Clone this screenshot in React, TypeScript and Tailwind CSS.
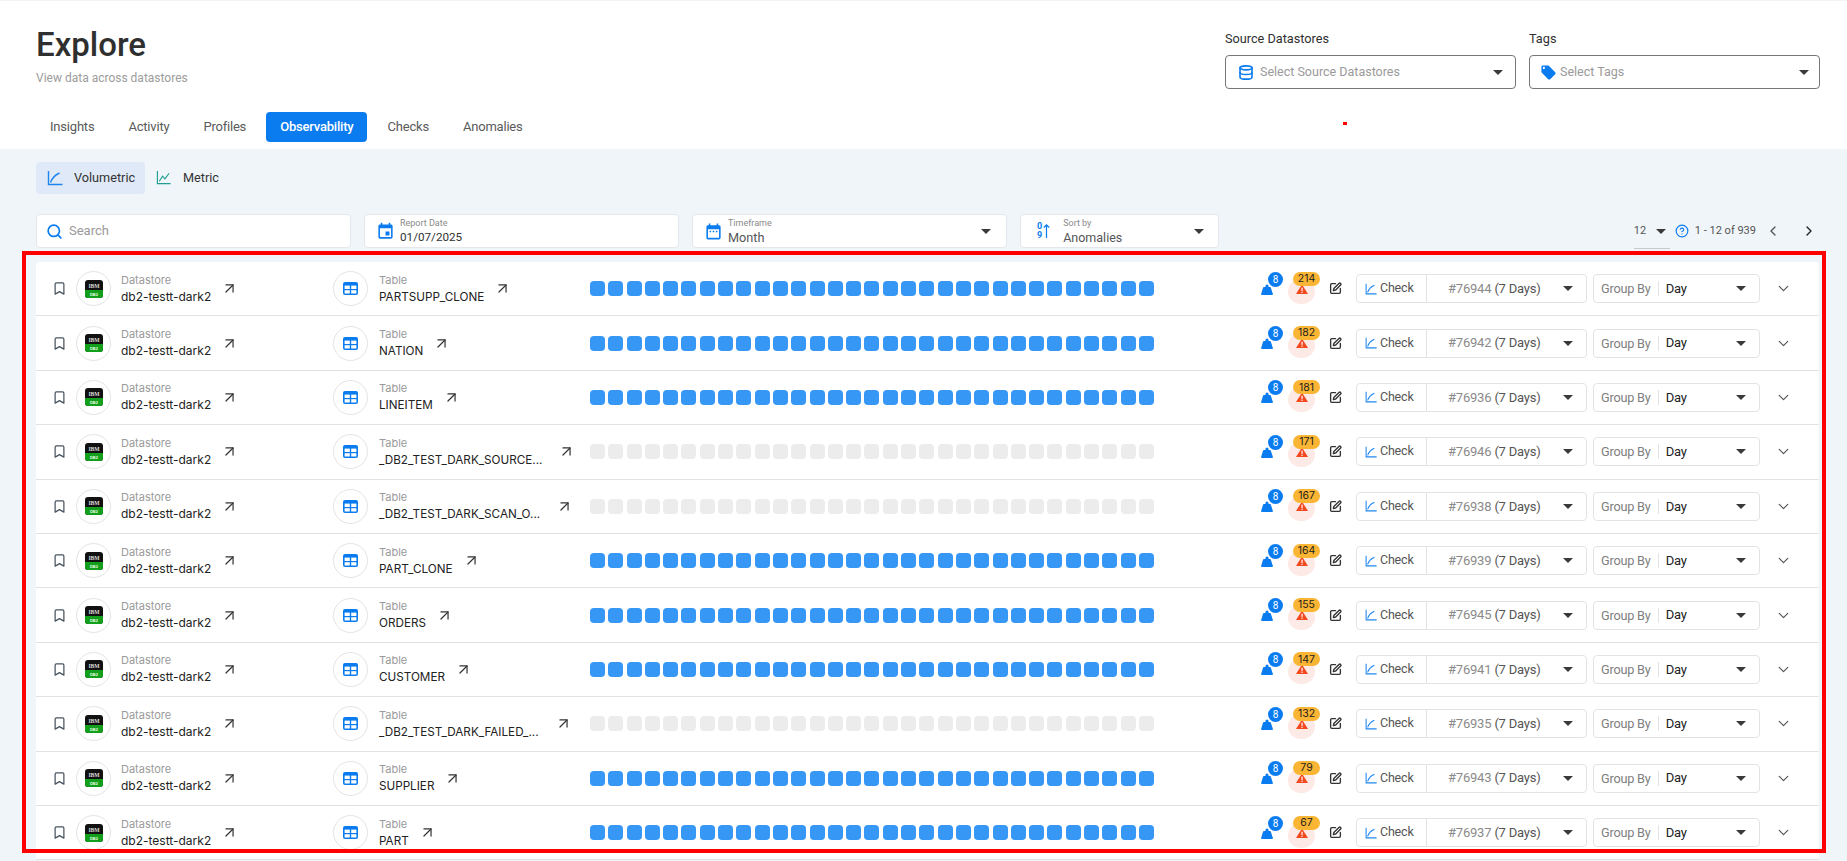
import { ArrowUpRight, Bookmark, ChevronDown, ChevronLeft, ChevronRight, CircleHelp, Database, Search, SquarePen } from 'lucide-react';
import { MdDateRange, MdEvent, MdLocalOffer } from 'react-icons/md';

const rows = [
  { table: 'PARTSUPP_CLONE', check: '#76944', count: 214, active: true },
  { table: 'NATION', check: '#76942', count: 182, active: true },
  { table: 'LINEITEM', check: '#76936', count: 181, active: true },
  { table: '_DB2_TEST_DARK_SOURCE...', check: '#76946', count: 171, active: false },
  { table: '_DB2_TEST_DARK_SCAN_O...', check: '#76938', count: 167, active: false },
  { table: 'PART_CLONE', check: '#76939', count: 164, active: true },
  { table: 'ORDERS', check: '#76945', count: 155, active: true },
  { table: 'CUSTOMER', check: '#76941', count: 147, active: true },
  { table: '_DB2_TEST_DARK_FAILED_...', check: '#76935', count: 132, active: false },
  { table: 'SUPPLIER', check: '#76943', count: 79, active: true },
  { table: 'PART', check: '#76937', count: 67, active: true },
];

const blocks = Array.from({ length: 31 }, (_, i) => i);
const tabs = ['Insights', 'Activity', 'Profiles', 'Observability', 'Checks', 'Anomalies'];

function Caret() {
  return <span className="inline-block w-0 h-0 border-x-[5px] border-x-transparent border-t-[5px] border-t-[#3a3a3a]" />;
}

function VolumeIcon({ className = '' }: { className?: string }) {
  return (
    <svg viewBox="0 0 16 16" fill="none" stroke="#1f86f0" strokeWidth="1.4" className={className}>
      <path d="M1.5 1v13.5H15.5" />
      <path d="M3.5 12.5C5 8 8 5 12.5 3" />
    </svg>
  );
}

function MetricIcon() {
  return (
    <svg viewBox="0 0 16 16" fill="none" strokeWidth="1.2" className="w-[15px] h-[15px]">
      <path d="M1.5 1v13.5H15.5" stroke="#1f9d8f" />
      <path d="M3.5 12L7 6.5l2.5 3L14 3.5" stroke="#1f9d8f" />
    </svg>
  );
}

function Db2Logo() {
  return (
    <svg viewBox="0 0 18 18" className="w-[18px] h-[18px]">
      <rect width="18" height="18" rx="3" fill="#111" />
      <path d="M0 10h18v5a3 3 0 0 1-3 3H3a3 3 0 0 1-3-3z" fill="#12a01c" />
      <text x="9" y="7.6" textAnchor="middle" fontSize="5.6" fontWeight="700" fill="#ddd" fontFamily="Liberation Serif, serif">IBM</text>
      <text x="9" y="15.6" textAnchor="middle" fontSize="4" fontWeight="700" fill="#e8ffe8" fontFamily="Liberation Sans, sans-serif">DB2</text>
    </svg>
  );
}

function TableIcon() {
  return (
    <svg viewBox="0 0 15 13" className="w-[15px] h-[13px]">
      <rect width="15" height="13" rx="2" fill="#0a7cf0" />
      <rect x="1.6" y="3.6" width="5.2" height="3.4" fill="#fff" />
      <rect x="8.2" y="3.6" width="5.2" height="3.4" fill="#fff" />
      <rect x="1.6" y="8.2" width="5.2" height="3.3" fill="#fff" />
      <rect x="8.2" y="8.2" width="5.2" height="3.3" fill="#fff" />
    </svg>
  );
}

function WeightIcon() {
  return (
    <svg viewBox="0 0 12 11" className="w-[12px] h-[11px]">
      <path d="M4.4 2.2a1.6 1.6 0 1 1 3.2 0c0 .3-.1.5-.2.7h1.6c.4 0 .7.2.8.6L11.9 10c.1.5-.2 1-.8 1H.9c-.6 0-.9-.5-.8-1l2-6.5c.1-.4.4-.6.8-.6h1.7a1.5 1.5 0 0 1-.2-.7z" fill="#0a7cf0" />
    </svg>
  );
}

function Row({ table, check, count, active }: { table: string; check: string; count: number; active: boolean }) {
  return (
    <div className="flex items-center h-[54.4px] border-b border-[#e2e2e2] bg-white pl-[16px]">
      <Bookmark className="w-[15px] h-[15px] text-[#4a5560] shrink-0" strokeWidth={2} />
      <div className="flex items-center w-[257px] ml-[9px] shrink-0">
        <div className="flex items-center justify-center w-[35px] h-[35px] rounded-full border border-[#e4e4e4] shrink-0">
          <Db2Logo />
        </div>
        <div className="ml-[10px] font-['Inter',sans-serif]">
          <div className="text-[11px] leading-[16px] text-[#9a9a9a]">Datastore</div>
          <div className="text-[12px] leading-[18px] text-[#222]">db2-testt-dark2</div>
        </div>
        <ArrowUpRight className="w-[17px] h-[17px] ml-[10px] text-[#333]" strokeWidth={1.7} />
      </div>
      <div className="flex items-center w-[257px] shrink-0">
        <div className="flex items-center justify-center w-[35px] h-[35px] rounded-full border border-[#e4e4e4] shrink-0">
          <TableIcon />
        </div>
        <div className="ml-[11px] font-['Inter',sans-serif]">
          <div className="text-[11px] leading-[16px] text-[#9a9a9a]">Table</div>
          <div className="text-[11.7px] leading-[18px] text-[#222] whitespace-nowrap">{table}</div>
        </div>
        <ArrowUpRight
          className={`w-[17px] h-[17px] text-[#333] shrink-0 ${table.endsWith('...') ? 'ml-[16px]' : 'ml-[10px]'}`}
          strokeWidth={1.7}
        />
      </div>
      <div className="flex gap-[3.3px] w-[671px] shrink-0">
        {blocks.map((b) => (
          <div key={b} className={`w-[15px] h-[15px] rounded-[4px] shrink-0 ${active ? 'bg-[#3797f5]' : 'bg-[#ececec]'}`} />
        ))}
      </div>
      <div className="relative w-[27px] h-[22px] shrink-0">
        <div className="absolute left-[0px] bottom-[5px]">
          <WeightIcon />
        </div>
        <div className="absolute left-[7px] top-[-6px] flex items-center justify-center w-[15px] h-[15px] rounded-full bg-[#0a7cf0] text-white text-[10px] font-['Roboto',sans-serif]">8</div>
      </div>
      <div className="relative flex items-end justify-center w-[27px] h-[25px] mt-[5px] rounded-full bg-[#fde9e5] shrink-0 pb-[10px]">
        <svg viewBox="0 0 14 11" className="w-[14px] h-[10px]">
          <path d="M7 0.5L13.6 11H0.4z" fill="#f4481e" />
          <rect x="6.4" y="4" width="1.3" height="3.6" fill="#fff" />
          <rect x="6.4" y="8.4" width="1.3" height="1.4" fill="#fff" />
        </svg>
        <div className="absolute left-[5px] top-[-7px] flex items-center justify-center w-[27px] h-[14px] rounded-full bg-[#fbb534] text-[10.5px] text-[#1d1d1d] font-['Inter',sans-serif]">{count}</div>
      </div>
      <SquarePen className="w-[13px] h-[13px] ml-[14px] text-[#333] shrink-0" strokeWidth={2.5} />
      <div className="flex items-center w-[231px] h-[29px] ml-[14px] rounded-[4px] border border-[#e3e3e3] shrink-0 font-['Roboto',sans-serif] text-[13px] tracking-[-0.2px]">
        <div className="flex items-center h-full w-[70px] border-r border-[#e3e3e3] pl-[8px]">
          <VolumeIcon className="w-[12px] h-[12px]" />
          <span className="ml-[3px] text-[12.5px] text-[#555]">Check</span>
        </div>
        <div className="flex items-center flex-1 pl-[21px] pr-[13px] justify-between">
          <span className="text-[#8a8a8a]">{check} <span className="text-[#555]">(7 Days)</span></span>
          <Caret />
        </div>
      </div>
      <div className="flex items-center w-[167px] h-[29px] ml-[6px] rounded-[4px] border border-[#e3e3e3] shrink-0 font-['Roboto',sans-serif] text-[13px] tracking-[-0.2px] pl-[7px] pr-[13px]">
        <span className="text-[12.7px] text-[#808080]">Group By</span>
        <span className="w-px h-[15px] bg-[#e3e3e3] ml-[7px]" />
        <span className="ml-[7px] flex-1 text-[#222]">Day</span>
        <Caret />
      </div>
      <ChevronDown className="w-[17px] h-[17px] ml-[15px] text-[#555] shrink-0" strokeWidth={1.7} />
    </div>
  );
}

export default function App() {
  return (
    <div className="relative h-[861px] overflow-hidden bg-[#f0f5fa] font-['Roboto',sans-serif]">
      <div className="h-[149px] bg-white border-t border-[#f3f3f3] px-[36px]">
        <div className="flex justify-between h-[111px]">
          <div className="pt-[24px]">
            <h1 className="text-[33px] leading-[40px] font-medium text-[#2f2f2f]">Explore</h1>
            <p className="mt-[4px] text-[12px] leading-[18px] text-[#9c9c9c]">View data across datastores</p>
          </div>
          <div className="flex gap-[13px] pt-[30px] mr-[-9px]">
            <div className="w-[291px]">
              <div className="text-[12.7px] leading-[16px] text-[#2f2f2f]">Source Datastores</div>
              <div className="flex items-center h-[34px] mt-[8px] px-[12px] rounded-[4px] border border-[#777]">
                <Database className="w-[16px] h-[17px] text-[#0a7cf0]" strokeWidth={2.4} />
                <span className="ml-[6px] flex-1 text-[12.5px] leading-[15px] mb-[2px] text-[#9a9a9a]">Select Source Datastores</span>
                <Caret />
              </div>
            </div>
            <div className="w-[291px]">
              <div className="text-[12.7px] leading-[16px] text-[#2f2f2f]">Tags</div>
              <div className="flex items-center h-[34px] mt-[8px] px-[10px] rounded-[4px] border border-[#777]">
                <MdLocalOffer className="w-[17px] h-[17px] text-[#0a7cf0]" />
                <span className="ml-[3px] flex-1 text-[12.5px] leading-[15px] mb-[2px] text-[#9a9a9a]">Select Tags</span>
                <Caret />
              </div>
            </div>
          </div>
        </div>
        <div className="flex items-center h-[30px] gap-[6px]">
          {tabs.map((t) => (
            <div
              key={t}
              className={`flex items-center h-full px-[14px] rounded-[4px] text-[13px] tracking-[-0.2px] ${t === 'Observability' ? 'bg-[#0a7cf0] text-white font-medium' : 'text-[#5a5a5a]'}`}
            >
              {t}
            </div>
          ))}
        </div>
      </div>

      <div className="px-[36px] pt-[13px]">
        <div className="flex items-center h-[32px] text-[12.7px] text-[#333]">
          <div className="flex items-center h-full w-[109px] pl-[11px] rounded-[4px] bg-[#dfe9f7]">
            <VolumeIcon className="w-[16px] h-[16px]" />
            <span className="ml-[11px]">Volumetric</span>
          </div>
          <div className="flex items-center ml-[11px]">
            <MetricIcon />
            <span className="ml-[12px]">Metric</span>
          </div>
        </div>

        <div className="flex items-center h-[34px] mt-[20px] gap-[13px] mr-[-9px]">
          <div className="flex items-center w-[315px] h-full pl-[9px] rounded-[4px] bg-white border border-[#e4e8ec]">
            <Search className="w-[17px] h-[17px] text-[#0a7cf0]" strokeWidth={2.4} />
            <span className="ml-[6px] text-[13px] text-[#9a9a9a]">Search</span>
          </div>
          <div className="flex items-center w-[315px] h-full pl-[11px] rounded-[4px] bg-white border border-[#e4e8ec]">
            <MdEvent className="w-[19px] h-[19px] text-[#0a7cf0]" />
            <div className="ml-[5px] mt-[2px]">
              <div className="text-[9px] leading-[11px] text-[#8a8a8a]">Report Date</div>
              <div className="text-[11.7px] leading-[17px] text-[#333]">01/07/2025</div>
            </div>
          </div>
          <div className="flex items-center w-[315px] h-full pl-[11px] pr-[15px] rounded-[4px] bg-white border border-[#e4e8ec]">
            <MdDateRange className="w-[19px] h-[19px] text-[#0a7cf0]" />
            <div className="ml-[5px] mt-[2px] flex-1">
              <div className="text-[9px] leading-[11px] text-[#8a8a8a]">Timeframe</div>
              <div className="text-[12.7px] leading-[17px] text-[#555]">Month</div>
            </div>
            <Caret />
          </div>
          <div className="flex items-center w-[199px] h-full pl-[16px] pr-[14px] rounded-[4px] bg-white border border-[#e4e8ec]">
            <div className="flex items-center gap-[1px] text-[#0a7cf0]">
              <div className="flex flex-col text-[9px] leading-[9px] font-bold">
                <span>0</span>
                <span>9</span>
              </div>
              <svg viewBox="0 0 8 16" className="w-[7px] h-[16px]" fill="none" stroke="#0a7cf0" strokeWidth="1.4">
                <path d="M4 16V1M1 4l3-3 3 3" />
              </svg>
            </div>
            <div className="ml-[13px] mt-[2px] flex-1">
              <div className="text-[9px] leading-[11px] text-[#8a8a8a]">Sort by</div>
              <div className="text-[12.5px] leading-[17px] text-[#555]">Anomalies</div>
            </div>
            <Caret />
          </div>
          <div className="flex items-center h-full ml-[auto] pr-[3px] text-[11px] text-[#555]">
            <div className="flex items-center justify-between w-[36px] h-[34px] pr-[4px] border-b border-[#c9c9c9] mt-[1px]">
              <span>12</span>
              <Caret />
            </div>
            <CircleHelp className="w-[14px] h-[14px] ml-[5px] text-[#0a7cf0]" strokeWidth={2} />
            <span className="ml-[6px]">1 - 12 of 939</span>
            <ChevronLeft className="w-[16px] h-[16px] ml-[9px] text-[#555]" />
            <ChevronRight className="w-[16px] h-[16px] ml-[20px] text-[#222]" />
          </div>
        </div>

        <div className="mt-[14px] mr-[-8px] rounded-t-[4px] overflow-hidden">
          {rows.map((r) => (
            <Row key={r.check} {...r} />
          ))}
        </div>
      </div>

      {/* annotation drawn on top of the screenshot */}
      <div className="absolute left-[22px] top-[251px] w-[1804px] h-[602px] border-[4px] border-[#ff0000] pointer-events-none" />
      <div className="absolute left-[1343px] top-[122px] w-[4px] h-[3px] bg-[#ff0000]" />
    </div>
  );
}
